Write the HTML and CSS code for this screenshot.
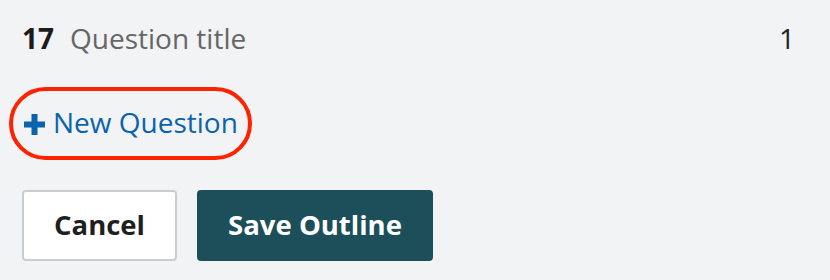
FILE: index.html
```html
<!DOCTYPE html>
<html>
<head>
<meta charset="utf-8">
<link rel="stylesheet" href="styles.css">
</head>
<body>
<div class="page">
  <div class="row">
    <span class="num">17</span>
    <span class="title">Question title</span>
    <span class="count">1</span>
  </div>
  <div class="add-wrap">
    <a class="add" href="#">
      <svg class="plus" width="21" height="21" viewBox="0 0 21 21"><path d="M7.5 0h6v7.5h7.5v6h-7.5v7.5h-6v-7.5H0v-6h7.5z" fill="#0b63ad"/></svg>
      <span>New Question</span>
    </a>
  </div>
  <div class="actions">
    <button class="btn cancel">Cancel</button>
    <button class="btn save">Save Outline</button>
  </div>
</div>
</body>
</html>
```
FILE: styles.css
```css
html, body {
  margin: 0;
  padding: 0;
  background: #f2f3f5;
}
.page {
  width: 830px;
  height: 280px;
  font-family: "Open Sans", "Noto Sans", sans-serif;
  box-sizing: border-box;
  padding: 18px 35px 0 22px;
}
.row {
  display: flex;
  align-items: baseline;
  height: 40px;
  line-height: 40px;
}
.num {
  font-weight: 700;
  font-size: 28px;
  color: #1b1b1b;
  width: 48px;
}
.title {
  font-size: 28px;
  color: #666;
  flex: 1;
}
.count {
  font-size: 28px;
  color: #222;
}
.add-wrap {
  margin-top: 29px;
  margin-left: -13px;
}
.add {
  display: inline-flex;
  align-items: center;
  gap: 8px;
  border: 4px solid #ff2200;
  border-radius: 40px;
  height: 73px;
  box-sizing: border-box;
  padding: 0 0 3px 11px;
  width: 243px;
  text-decoration: none;
  color: #0b63ad;
  font-size: 28px;
}
.plus {
  flex: none;
  margin-top: 4px;
}
.actions {
  display: flex;
  gap: 20px;
  margin-top: 30px;
}
.btn {
  height: 71px;
  border-radius: 4px;
  font-family: "Open Sans", "Noto Sans", sans-serif;
  font-weight: 700;
  font-size: 27.5px;
  box-sizing: border-box;
  cursor: pointer;
  padding: 0 0 3px;
}
.cancel {
  width: 155px;
  background: #fff;
  border: 2px solid #cccccc;
  color: #1f1f1f;
}
.save {
  width: 236px;
  background: #1c4f5a;
  border: none;
  color: #fff;
}
```
